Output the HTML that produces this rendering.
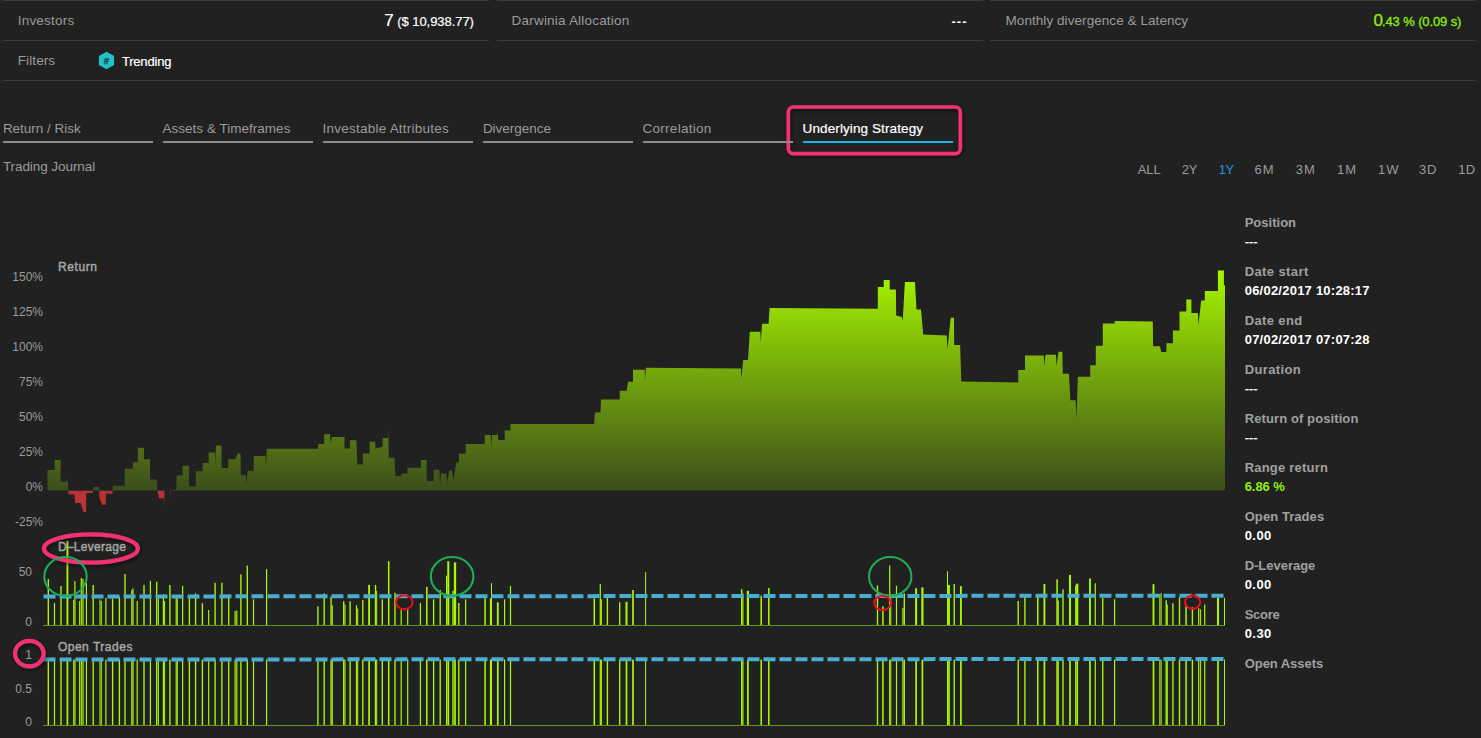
<!DOCTYPE html>
<html><head><meta charset="utf-8"><title>Underlying Strategy</title>
<style>
html,body{margin:0;padding:0;background:#212121;}
body{width:1481px;height:738px;position:relative;overflow:hidden;font-family:"Liberation Sans",sans-serif;color:#9b9b9b;font-size:13px;}
.chart{position:absolute;left:0;top:0;}
.t{position:absolute;white-space:nowrap;line-height:1;transform-origin:0 50%;}
.r{position:absolute;white-space:nowrap;line-height:1;transform-origin:100% 50%;}
.hl{position:absolute;height:1px;background:#3d3d3d;}
.ul{position:absolute;height:2px;background:#8c8c8c;top:141px;width:150px;}
.w{color:#fff;-webkit-text-stroke:0.2px #fff;}
.b{font-weight:bold;-webkit-text-stroke:0 !important;}
.sb{color:#a6a6a6;-webkit-text-stroke:0.45px #a6a6a6;}
.g{color:#90ee0c;-webkit-text-stroke:0.3px #90ee0c;}
.ax{position:absolute;white-space:nowrap;line-height:1;font-size:12px;color:#9b9b9b;text-align:right;width:40px;left:3px;}
</style></head><body>
<svg class="chart" width="1481" height="738" viewBox="0 0 1481 738">
<defs>
<linearGradient id="gg" gradientUnits="userSpaceOnUse" x1="0" y1="270" x2="0" y2="491">
<stop offset="0" stop-color="#a6f600"/><stop offset="1" stop-color="#3c4d1b"/>
</linearGradient>
<clipPath id="up"><rect x="0" y="200" width="1481" height="291"/></clipPath>
<clipPath id="dn"><rect x="0" y="491" width="1481" height="60"/></clipPath>
<filter id="sh" x="-20%" y="-20%" width="140%" height="150%"><feDropShadow dx="1" dy="2" stdDeviation="2" flood-color="#000" flood-opacity="0.55"/></filter>
</defs>
<polygon points="44,490.5 47.5,490.5 47.5,469.9 54.6,469.9 54.6,460 60.6,460 60.6,481.6 67.3,481.6 67.8,477.6 68.2,490.5 68.5,494.5 74.5,494.5 75.2,503 80.6,503 83.4,512 86.1,512 86.3,493 92.8,493 93.3,487 99,487 99.6,498.5 102.3,504.7 105.7,504.7 106,493.8 112.5,493.8 112.8,485.7 124.7,485.7 124.7,468.8 132.8,468.8 132.8,462.3 137.8,462.3 137.8,447.8 144,447.8 144,459.3 150,459.3 150,479.6 156.8,479.6 157.2,490.5 159.2,498.3 163.8,498.3 164,506.7 164.5,490.5 169.8,490.5 170,500 170.4,489.8 176.4,489.8 176.6,475.5 182.5,475.5 182.5,465.8 189,465.8 189,486.4 195.8,486.4 195.8,471.2 202.6,471.2 202.6,463 208.7,463 208.7,452.5 214.8,452.5 215.2,463 215.9,445.5 221.6,445.5 221.6,468 228.3,468 228.3,459.3 235.4,459.3 237.6,453.6 240.5,453.6 240.8,475.3 246,475.3 246.5,485 247.6,470.8 253.7,470.8 253.7,455.9 265.5,455.9 265.9,466.7 266.9,448.7 318,448.7 318,444.1 324.2,444.1 324.2,434.2 330,434.2 330.5,443.7 331.9,436.9 344.5,436.9 344.5,448.5 349.9,448.5 349.9,440.3 356.3,440.3 357.4,464.4 362.8,464.4 362.8,453.6 369.6,453.6 369.6,441.7 375.3,441.7 375.3,448.5 382.5,446.8 382.8,438 388,438 388.3,429.5 388.8,457.7 394.4,457.7 395.6,476.2 401.4,476.2 401.4,473.5 407.5,473.5 407.5,467.7 420.8,467.7 421,460 426.7,460 426.8,481 433.6,481 433.6,469.8 439.4,469.8 440,485.4 441,473.4 446.2,473.4 447.2,483.3 449.1,470.5 452,470.5 453.3,480.6 456.3,462.6 459,462.6 459,453.8 465.7,453.8 465.7,444 484.8,444 484.8,435 490.8,435 491.1,446.7 492.1,435 497.3,435 497.5,430 498.3,440 504.7,440 504.7,430.5 510.5,430.5 510.5,424 594.1,424 595,412.5 600.5,412.5 601,399.4 619.7,399.4 619.7,390.7 626.7,390.7 628,381.7 633,381.7 633,369.7 644.7,369.7 645,380 645.9,367.7 741,368.5 741.4,378.4 743.2,360 748,360 749.8,331.7 760.4,331.7 760.8,342.5 762,323.7 768.6,323.7 769.6,308 877.8,308.8 877.8,287.1 883.7,287.1 883.7,280.1 889.7,280.1 889.7,289.4 895.9,289.4 896.2,315.5 901.8,317 902.7,320.7 904.9,281.9 915,281.9 916.5,309.5 921,309.5 923.2,334.4 946.8,335.4 947.4,349.5 950.7,317.8 954,317.8 954.2,345 960.1,345 961.3,381.5 1018.3,382.6 1018.3,369.9 1025,369.9 1025,355.5 1043.8,355.5 1044.2,365.9 1045.5,354.7 1056,354.7 1056.5,365.9 1058.5,351.7 1062.3,351.7 1062.8,373.8 1068.9,373.8 1070.4,400.2 1075.6,400.2 1076.4,418.5 1077.9,376.8 1090.2,376.8 1090.2,365.2 1095.8,365.2 1095.8,345.8 1102.8,345.8 1102.8,323.4 1114.7,323.4 1114.7,320.9 1152.8,321.4 1153.1,346.2 1159.8,346.2 1161.3,352.1 1166.3,352.1 1166.5,343.2 1172.9,343.2 1172.9,330.4 1179.5,330.4 1179.5,311.4 1186.3,311.4 1186.3,299.5 1191.4,299.5 1191.4,312.9 1198,312.9 1198.3,325.6 1201.2,300.5 1204.8,300.5 1204.8,291 1217.9,291 1217.9,270.4 1223.9,270.4 1223.9,285.3 1225,285.3 1225,490.5" fill="url(#gg)" clip-path="url(#up)"/>
<polygon points="44,490.5 47.5,490.5 47.5,469.9 54.6,469.9 54.6,460 60.6,460 60.6,481.6 67.3,481.6 67.8,477.6 68.2,490.5 68.5,494.5 74.5,494.5 75.2,503 80.6,503 83.4,512 86.1,512 86.3,493 92.8,493 93.3,487 99,487 99.6,498.5 102.3,504.7 105.7,504.7 106,493.8 112.5,493.8 112.8,485.7 124.7,485.7 124.7,468.8 132.8,468.8 132.8,462.3 137.8,462.3 137.8,447.8 144,447.8 144,459.3 150,459.3 150,479.6 156.8,479.6 157.2,490.5 159.2,498.3 163.8,498.3 164,506.7 164.5,490.5 169.8,490.5 170,500 170.4,489.8 176.4,489.8 176.6,475.5 182.5,475.5 182.5,465.8 189,465.8 189,486.4 195.8,486.4 195.8,471.2 202.6,471.2 202.6,463 208.7,463 208.7,452.5 214.8,452.5 215.2,463 215.9,445.5 221.6,445.5 221.6,468 228.3,468 228.3,459.3 235.4,459.3 237.6,453.6 240.5,453.6 240.8,475.3 246,475.3 246.5,485 247.6,470.8 253.7,470.8 253.7,455.9 265.5,455.9 265.9,466.7 266.9,448.7 318,448.7 318,444.1 324.2,444.1 324.2,434.2 330,434.2 330.5,443.7 331.9,436.9 344.5,436.9 344.5,448.5 349.9,448.5 349.9,440.3 356.3,440.3 357.4,464.4 362.8,464.4 362.8,453.6 369.6,453.6 369.6,441.7 375.3,441.7 375.3,448.5 382.5,446.8 382.8,438 388,438 388.3,429.5 388.8,457.7 394.4,457.7 395.6,476.2 401.4,476.2 401.4,473.5 407.5,473.5 407.5,467.7 420.8,467.7 421,460 426.7,460 426.8,481 433.6,481 433.6,469.8 439.4,469.8 440,485.4 441,473.4 446.2,473.4 447.2,483.3 449.1,470.5 452,470.5 453.3,480.6 456.3,462.6 459,462.6 459,453.8 465.7,453.8 465.7,444 484.8,444 484.8,435 490.8,435 491.1,446.7 492.1,435 497.3,435 497.5,430 498.3,440 504.7,440 504.7,430.5 510.5,430.5 510.5,424 594.1,424 595,412.5 600.5,412.5 601,399.4 619.7,399.4 619.7,390.7 626.7,390.7 628,381.7 633,381.7 633,369.7 644.7,369.7 645,380 645.9,367.7 741,368.5 741.4,378.4 743.2,360 748,360 749.8,331.7 760.4,331.7 760.8,342.5 762,323.7 768.6,323.7 769.6,308 877.8,308.8 877.8,287.1 883.7,287.1 883.7,280.1 889.7,280.1 889.7,289.4 895.9,289.4 896.2,315.5 901.8,317 902.7,320.7 904.9,281.9 915,281.9 916.5,309.5 921,309.5 923.2,334.4 946.8,335.4 947.4,349.5 950.7,317.8 954,317.8 954.2,345 960.1,345 961.3,381.5 1018.3,382.6 1018.3,369.9 1025,369.9 1025,355.5 1043.8,355.5 1044.2,365.9 1045.5,354.7 1056,354.7 1056.5,365.9 1058.5,351.7 1062.3,351.7 1062.8,373.8 1068.9,373.8 1070.4,400.2 1075.6,400.2 1076.4,418.5 1077.9,376.8 1090.2,376.8 1090.2,365.2 1095.8,365.2 1095.8,345.8 1102.8,345.8 1102.8,323.4 1114.7,323.4 1114.7,320.9 1152.8,321.4 1153.1,346.2 1159.8,346.2 1161.3,352.1 1166.3,352.1 1166.5,343.2 1172.9,343.2 1172.9,330.4 1179.5,330.4 1179.5,311.4 1186.3,311.4 1186.3,299.5 1191.4,299.5 1191.4,312.9 1198,312.9 1198.3,325.6 1201.2,300.5 1204.8,300.5 1204.8,291 1217.9,291 1217.9,270.4 1223.9,270.4 1223.9,285.3 1225,285.3 1225,490.5" fill="#b93234" clip-path="url(#dn)"/>
<g fill="#a6fa00"><rect x="47.62" y="579" width="1.36" height="46.8"/><rect x="53.91" y="603" width="1.19" height="22.8"/><rect x="60.32" y="586" width="1.36" height="39.8"/><rect x="66.47" y="541" width="1.87" height="84.8"/><rect x="73.19" y="600" width="1.02" height="25.8"/><rect x="74.31" y="581" width="1.19" height="44.8"/><rect x="79.09" y="601" width="1.02" height="24.8"/><rect x="80.70" y="578" width="1.19" height="47.8"/><rect x="82.41" y="579" width="1.19" height="46.8"/><rect x="85.81" y="582.5" width="1.19" height="43.3"/><rect x="92.52" y="585" width="1.36" height="40.8"/><rect x="99.49" y="599.4" width="1.02" height="26.4"/><rect x="100.79" y="601" width="1.02" height="24.8"/><rect x="105.31" y="597.8" width="1.19" height="28.0"/><rect x="111.92" y="598.6" width="1.36" height="27.2"/><rect x="118.72" y="597" width="1.36" height="28.8"/><rect x="124.32" y="574" width="1.36" height="51.8"/><rect x="131.21" y="590" width="1.19" height="35.8"/><rect x="132.41" y="588.4" width="1.19" height="37.4"/><rect x="136.60" y="601" width="1.19" height="24.8"/><rect x="143.32" y="585" width="1.36" height="40.8"/><rect x="149.81" y="580.8" width="1.19" height="45.0"/><rect x="156.02" y="581.7" width="1.36" height="44.1"/><rect x="157.89" y="597" width="1.02" height="28.8"/><rect x="162.81" y="594.4" width="1.19" height="31.4"/><rect x="164.09" y="601" width="1.02" height="24.8"/><rect x="169.22" y="585" width="1.36" height="40.8"/><rect x="175.60" y="597.8" width="1.19" height="28.0"/><rect x="176.79" y="598.6" width="1.02" height="27.2"/><rect x="182.00" y="585.9" width="1.19" height="39.9"/><rect x="188.72" y="597.8" width="1.36" height="28.0"/><rect x="194.92" y="593.5" width="1.36" height="32.3"/><rect x="201.72" y="603.2" width="1.36" height="22.6"/><rect x="208.10" y="610" width="1.19" height="15.8"/><rect x="214.42" y="582.8" width="1.36" height="43.0"/><rect x="221.22" y="582.8" width="1.36" height="43.0"/><rect x="228.02" y="597.8" width="1.36" height="28.0"/><rect x="234.50" y="611" width="1.19" height="14.8"/><rect x="236.21" y="610.5" width="1.19" height="15.3"/><rect x="240.22" y="574.4" width="1.36" height="51.4"/><rect x="246.62" y="565.6" width="1.36" height="60.2"/><rect x="252.91" y="599.3" width="1.19" height="26.5"/><rect x="266.00" y="569.1" width="1.19" height="56.7"/><rect x="317.22" y="606.4" width="1.36" height="19.4"/><rect x="323.52" y="593.4" width="1.36" height="32.4"/><rect x="330.42" y="596.7" width="1.36" height="29.1"/><rect x="331.79" y="605.2" width="1.02" height="20.6"/><rect x="343.02" y="601.3" width="1.36" height="24.5"/><rect x="344.49" y="604.4" width="1.02" height="21.4"/><rect x="349.42" y="601.3" width="1.36" height="24.5"/><rect x="355.90" y="605.2" width="1.19" height="20.6"/><rect x="357.19" y="608.6" width="1.02" height="17.2"/><rect x="362.12" y="600.1" width="1.36" height="25.7"/><rect x="368.17" y="584.9" width="1.87" height="40.9"/><rect x="374.82" y="584.9" width="1.36" height="40.9"/><rect x="376.19" y="590.8" width="1.02" height="35.0"/><rect x="381.62" y="599.3" width="1.36" height="26.5"/><rect x="387.94" y="561.2" width="1.53" height="64.6"/><rect x="394.32" y="592.8" width="1.36" height="33.0"/><rect x="400.60" y="609.4" width="1.19" height="16.4"/><rect x="407.10" y="609.4" width="1.19" height="16.4"/><rect x="419.80" y="603" width="1.19" height="22.8"/><rect x="426.04" y="586.9" width="1.53" height="38.9"/><rect x="432.92" y="599.3" width="1.36" height="26.5"/><rect x="439.52" y="590" width="1.36" height="35.8"/><rect x="446.00" y="575.6" width="1.19" height="50.2"/><rect x="447.28" y="561.2" width="2.04" height="64.6"/><rect x="452.32" y="590.8" width="1.36" height="35.0"/><rect x="453.85" y="562.4" width="2.3" height="63.4"/><rect x="458.12" y="603" width="1.36" height="22.8"/><rect x="465.00" y="599.3" width="1.19" height="26.5"/><rect x="484.34" y="598.4" width="1.53" height="27.4"/><rect x="489.90" y="598.4" width="1.19" height="27.4"/><rect x="490.99" y="583.2" width="1.02" height="42.6"/><rect x="496.87" y="602.3" width="1.87" height="23.5"/><rect x="504.00" y="599.3" width="1.19" height="26.5"/><rect x="509.90" y="586" width="1.19" height="39.8"/><rect x="593.53" y="598.4" width="1.53" height="27.4"/><rect x="599.70" y="584" width="1.19" height="41.8"/><rect x="600.70" y="599.3" width="1.19" height="26.5"/><rect x="606.72" y="594.5" width="1.36" height="31.3"/><rect x="619.02" y="602.3" width="1.36" height="23.5"/><rect x="625.48" y="601.8" width="2.04" height="24.0"/><rect x="632.15" y="590" width="1.7" height="35.8"/><rect x="645.09" y="572.2" width="1.02" height="53.6"/><rect x="741.02" y="589.1" width="1.36" height="36.7"/><rect x="742.30" y="593.4" width="1.19" height="32.4"/><rect x="746.79" y="590.8" width="2.21" height="35.0"/><rect x="760.44" y="595.6" width="1.53" height="30.2"/><rect x="768.03" y="587.9" width="1.53" height="37.9"/><rect x="876.82" y="585.4" width="1.36" height="40.4"/><rect x="882.13" y="606.4" width="1.53" height="19.4"/><rect x="889.11" y="565.4" width="1.19" height="60.4"/><rect x="890.29" y="594.2" width="1.02" height="31.6"/><rect x="895.90" y="585.7" width="1.19" height="40.1"/><rect x="902.30" y="607.8" width="1.19" height="18.0"/><rect x="903.62" y="593.4" width="1.36" height="32.4"/><rect x="915.08" y="588.3" width="2.04" height="37.5"/><rect x="921.29" y="587.4" width="2.21" height="38.4"/><rect x="946.99" y="571.3" width="1.02" height="54.5"/><rect x="948.07" y="584.9" width="1.87" height="40.9"/><rect x="953.52" y="584" width="1.36" height="41.8"/><rect x="959.97" y="586.1" width="1.87" height="39.7"/><rect x="1017.52" y="601" width="1.36" height="24.8"/><rect x="1024.22" y="597" width="1.36" height="28.8"/><rect x="1037.03" y="597" width="1.53" height="28.8"/><rect x="1043.47" y="584" width="1.87" height="41.8"/><rect x="1056.33" y="579.3" width="1.53" height="46.5"/><rect x="1057.61" y="600.7" width="1.19" height="25.1"/><rect x="1062.32" y="589.3" width="1.36" height="36.5"/><rect x="1068.98" y="575" width="2.04" height="50.8"/><rect x="1075.11" y="585.5" width="1.19" height="40.3"/><rect x="1076.10" y="583.6" width="2.21" height="42.2"/><rect x="1089.07" y="578.5" width="1.87" height="47.3"/><rect x="1094.70" y="583.3" width="1.19" height="42.5"/><rect x="1102.02" y="597.9" width="1.36" height="27.9"/><rect x="1114.00" y="599.2" width="1.19" height="26.6"/><rect x="1152.57" y="584.2" width="1.87" height="41.6"/><rect x="1159.29" y="594" width="1.02" height="31.8"/><rect x="1160.59" y="593" width="1.02" height="32.8"/><rect x="1165.52" y="600.3" width="1.36" height="25.5"/><rect x="1166.79" y="604.5" width="1.02" height="21.3"/><rect x="1172.22" y="603.2" width="1.36" height="22.6"/><rect x="1178.82" y="597" width="1.36" height="28.8"/><rect x="1185.33" y="604.5" width="1.53" height="21.3"/><rect x="1191.72" y="607.3" width="1.36" height="18.5"/><rect x="1198.11" y="608.3" width="1.19" height="17.5"/><rect x="1200.09" y="609.3" width="1.02" height="16.5"/><rect x="1204.11" y="604.5" width="1.19" height="21.3"/><rect x="1216.98" y="597.9" width="2.04" height="27.9"/><rect x="1223.99" y="597.9" width="1.02" height="27.9"/></g>
<rect x="43" y="625" width="1182" height="1" fill="#6a9410"/>
<g fill="#a6fa00"><rect x="47.62" y="659.5" width="1.36" height="66"/><rect x="53.91" y="659.5" width="1.19" height="66"/><rect x="60.32" y="659.5" width="1.36" height="66"/><rect x="66.55" y="659.5" width="1.7" height="66"/><rect x="73.19" y="659.5" width="1.02" height="66"/><rect x="74.31" y="659.5" width="1.19" height="66"/><rect x="79.09" y="659.5" width="1.02" height="66"/><rect x="80.70" y="659.5" width="1.19" height="66"/><rect x="82.41" y="659.5" width="1.19" height="66"/><rect x="85.81" y="659.5" width="1.19" height="66"/><rect x="92.52" y="659.5" width="1.36" height="66"/><rect x="99.49" y="659.5" width="1.02" height="66"/><rect x="100.79" y="659.5" width="1.02" height="66"/><rect x="105.31" y="659.5" width="1.19" height="66"/><rect x="111.92" y="659.5" width="1.36" height="66"/><rect x="118.72" y="659.5" width="1.36" height="66"/><rect x="124.32" y="659.5" width="1.36" height="66"/><rect x="131.21" y="659.5" width="1.19" height="66"/><rect x="132.41" y="659.5" width="1.19" height="66"/><rect x="136.60" y="659.5" width="1.19" height="66"/><rect x="143.32" y="659.5" width="1.36" height="66"/><rect x="149.81" y="659.5" width="1.19" height="66"/><rect x="156.02" y="659.5" width="1.36" height="66"/><rect x="157.89" y="659.5" width="1.02" height="66"/><rect x="162.81" y="659.5" width="1.19" height="66"/><rect x="164.09" y="659.5" width="1.02" height="66"/><rect x="169.22" y="659.5" width="1.36" height="66"/><rect x="175.60" y="659.5" width="1.19" height="66"/><rect x="176.79" y="659.5" width="1.02" height="66"/><rect x="182.00" y="659.5" width="1.19" height="66"/><rect x="188.72" y="659.5" width="1.36" height="66"/><rect x="194.92" y="659.5" width="1.36" height="66"/><rect x="201.72" y="659.5" width="1.36" height="66"/><rect x="208.10" y="659.5" width="1.19" height="66"/><rect x="214.42" y="659.5" width="1.36" height="66"/><rect x="221.22" y="659.5" width="1.36" height="66"/><rect x="228.02" y="659.5" width="1.36" height="66"/><rect x="234.50" y="659.5" width="1.19" height="66"/><rect x="236.21" y="659.5" width="1.19" height="66"/><rect x="240.22" y="659.5" width="1.36" height="66"/><rect x="246.62" y="659.5" width="1.36" height="66"/><rect x="252.91" y="659.5" width="1.19" height="66"/><rect x="266.00" y="659.5" width="1.19" height="66"/><rect x="317.22" y="659.5" width="1.36" height="66"/><rect x="323.52" y="659.5" width="1.36" height="66"/><rect x="330.42" y="659.5" width="1.36" height="66"/><rect x="331.79" y="659.5" width="1.02" height="66"/><rect x="343.02" y="659.5" width="1.36" height="66"/><rect x="344.49" y="659.5" width="1.02" height="66"/><rect x="349.42" y="659.5" width="1.36" height="66"/><rect x="355.90" y="659.5" width="1.19" height="66"/><rect x="357.19" y="659.5" width="1.02" height="66"/><rect x="362.12" y="659.5" width="1.36" height="66"/><rect x="368.25" y="659.5" width="1.7" height="66"/><rect x="374.82" y="659.5" width="1.36" height="66"/><rect x="376.19" y="659.5" width="1.02" height="66"/><rect x="381.62" y="659.5" width="1.36" height="66"/><rect x="387.94" y="659.5" width="1.53" height="66"/><rect x="394.32" y="659.5" width="1.36" height="66"/><rect x="400.60" y="659.5" width="1.19" height="66"/><rect x="407.10" y="659.5" width="1.19" height="66"/><rect x="419.80" y="659.5" width="1.19" height="66"/><rect x="426.04" y="659.5" width="1.53" height="66"/><rect x="432.92" y="659.5" width="1.36" height="66"/><rect x="439.52" y="659.5" width="1.36" height="66"/><rect x="446.00" y="659.5" width="1.19" height="66"/><rect x="447.45" y="659.5" width="1.7" height="66"/><rect x="452.32" y="659.5" width="1.36" height="66"/><rect x="454.15" y="659.5" width="1.7" height="66"/><rect x="458.12" y="659.5" width="1.36" height="66"/><rect x="465.00" y="659.5" width="1.19" height="66"/><rect x="484.34" y="659.5" width="1.53" height="66"/><rect x="489.90" y="659.5" width="1.19" height="66"/><rect x="490.99" y="659.5" width="1.02" height="66"/><rect x="496.95" y="659.5" width="1.7" height="66"/><rect x="504.00" y="659.5" width="1.19" height="66"/><rect x="509.90" y="659.5" width="1.19" height="66"/><rect x="593.53" y="659.5" width="1.53" height="66"/><rect x="599.70" y="659.5" width="1.19" height="66"/><rect x="600.70" y="659.5" width="1.19" height="66"/><rect x="606.72" y="659.5" width="1.36" height="66"/><rect x="619.02" y="659.5" width="1.36" height="66"/><rect x="625.65" y="659.5" width="1.7" height="66"/><rect x="632.15" y="659.5" width="1.7" height="66"/><rect x="645.09" y="659.5" width="1.02" height="66"/><rect x="741.02" y="659.5" width="1.36" height="66"/><rect x="742.30" y="659.5" width="1.19" height="66"/><rect x="747.05" y="659.5" width="1.7" height="66"/><rect x="760.44" y="659.5" width="1.53" height="66"/><rect x="768.03" y="659.5" width="1.53" height="66"/><rect x="876.82" y="659.5" width="1.36" height="66"/><rect x="882.13" y="659.5" width="1.53" height="66"/><rect x="889.11" y="659.5" width="1.19" height="66"/><rect x="890.29" y="659.5" width="1.02" height="66"/><rect x="895.90" y="659.5" width="1.19" height="66"/><rect x="902.30" y="659.5" width="1.19" height="66"/><rect x="903.62" y="659.5" width="1.36" height="66"/><rect x="915.25" y="659.5" width="1.7" height="66"/><rect x="921.55" y="659.5" width="1.7" height="66"/><rect x="946.99" y="659.5" width="1.02" height="66"/><rect x="948.15" y="659.5" width="1.7" height="66"/><rect x="953.52" y="659.5" width="1.36" height="66"/><rect x="960.05" y="659.5" width="1.7" height="66"/><rect x="1017.52" y="659.5" width="1.36" height="66"/><rect x="1024.22" y="659.5" width="1.36" height="66"/><rect x="1037.03" y="659.5" width="1.53" height="66"/><rect x="1043.55" y="659.5" width="1.7" height="66"/><rect x="1056.33" y="659.5" width="1.53" height="66"/><rect x="1057.61" y="659.5" width="1.19" height="66"/><rect x="1062.32" y="659.5" width="1.36" height="66"/><rect x="1069.15" y="659.5" width="1.7" height="66"/><rect x="1075.11" y="659.5" width="1.19" height="66"/><rect x="1076.35" y="659.5" width="1.7" height="66"/><rect x="1089.15" y="659.5" width="1.7" height="66"/><rect x="1094.70" y="659.5" width="1.19" height="66"/><rect x="1102.02" y="659.5" width="1.36" height="66"/><rect x="1114.00" y="659.5" width="1.19" height="66"/><rect x="1152.65" y="659.5" width="1.7" height="66"/><rect x="1159.29" y="659.5" width="1.02" height="66"/><rect x="1160.59" y="659.5" width="1.02" height="66"/><rect x="1165.52" y="659.5" width="1.36" height="66"/><rect x="1166.79" y="659.5" width="1.02" height="66"/><rect x="1172.22" y="659.5" width="1.36" height="66"/><rect x="1178.82" y="659.5" width="1.36" height="66"/><rect x="1185.33" y="659.5" width="1.53" height="66"/><rect x="1191.72" y="659.5" width="1.36" height="66"/><rect x="1198.11" y="659.5" width="1.19" height="66"/><rect x="1200.09" y="659.5" width="1.02" height="66"/><rect x="1204.11" y="659.5" width="1.19" height="66"/><rect x="1217.15" y="659.5" width="1.7" height="66"/><rect x="1223.99" y="659.5" width="1.02" height="66"/></g>
<rect x="43" y="725" width="1182" height="1" fill="#6a9410"/>
<line x1="43.5" y1="596.5" x2="1223.6" y2="595.7" stroke="#49aecf" stroke-width="4" stroke-dasharray="12 4"/>
<line x1="43.5" y1="659.5" x2="1223.6" y2="659" stroke="#49aecf" stroke-width="4" stroke-dasharray="12 4"/>
<g fill="none" stroke="#f2336f" stroke-width="4.2" filter="url(#sh)">
<rect x="788.3" y="107" width="172" height="46.6" rx="5" ry="5" stroke-width="3.6"/>
<ellipse cx="90.9" cy="548.5" rx="47" ry="14.1"/>
<ellipse cx="29.3" cy="653.6" rx="14.3" ry="12.8"/>
</g>
<g fill="none" stroke="#1fac58" stroke-width="2.1">
<ellipse cx="65.5" cy="576.5" rx="21.2" ry="19.5"/><ellipse cx="452.1" cy="576.4" rx="21.3" ry="19.4"/><ellipse cx="890.2" cy="576.4" rx="21.2" ry="19.4"/>
</g>
<g fill="none" stroke="#f00a1e" stroke-width="2">
<ellipse cx="404.3" cy="602.2" rx="8.3" ry="7"/><ellipse cx="882.6" cy="603" rx="8.4" ry="7"/><ellipse cx="1192.6" cy="602.2" rx="7.6" ry="6.6"/>
</g>
<polygon points="106.5,51.7 114.1,56 114.1,64.9 106.5,69.2 98.9,64.9 98.9,56" fill="#21c3c9"/>
<text x="106.5" y="63.8" text-anchor="middle" font-family="Liberation Sans, sans-serif" font-weight="bold" font-size="9.5" fill="#15555b" stroke="#15555b" stroke-width="0.5">#</text>
</svg>
<div class="hl" style="left:3px;width:486px;top:0"></div>
<div class="hl" style="left:3px;width:486px;top:40px"></div>
<div class="hl" style="left:497px;width:486px;top:0"></div>
<div class="hl" style="left:497px;width:486px;top:40px"></div>
<div class="hl" style="left:990px;width:486px;top:0"></div>
<div class="hl" style="left:990px;width:486px;top:40px"></div>
<div class="hl" style="left:3px;width:1473px;top:80px"></div>
<div class="ul" style="left:3px;"></div>
<div class="ul" style="left:163px;"></div>
<div class="ul" style="left:323px;"></div>
<div class="ul" style="left:483px;"></div>
<div class="ul" style="left:643px;"></div>
<div class="ul" style="left:803px;background:#19b5e8;"></div>
<div class="ax" style="top:271px">150%</div>
<div class="ax" style="top:306px">125%</div>
<div class="ax" style="top:341px">100%</div>
<div class="ax" style="top:376px">75%</div>
<div class="ax" style="top:411px">50%</div>
<div class="ax" style="top:446px">25%</div>
<div class="ax" style="top:481px">0%</div>
<div class="ax" style="top:516px">-25%</div>
<div class="ax" style="top:566px;width:29px">50</div>
<div class="ax" style="top:615.5px;width:29px">0</div>
<div class="ax" style="top:649px;width:29px">1</div>
<div class="ax" style="top:683px;width:29px">0.5</div>
<div class="ax" style="top:715.7px;width:29px">0</div>
<div class="t " style="left:17.7px;top:13.9px;font-size:13.5px;letter-spacing:0.217px;">Investors</div>
<div class="t w" style="left:384.2px;top:11.9px;font-size:17px;">7</div>
<div class="t w" style="left:397.2px;top:15.3px;font-size:13px;letter-spacing:-0.048px;">($ 10,938.77)</div>
<div class="t " style="left:511.6px;top:13.9px;font-size:13.5px;letter-spacing:0.197px;">Darwinia Allocation</div>
<div class="t w b" style="left:951.5px;top:14.6px;font-size:13px;letter-spacing:1.000px;">---</div>
<div class="t " style="left:1005.5px;top:13.9px;font-size:13.5px;letter-spacing:0.065px;">Monthly divergence &amp; Latency</div>
<div class="t g" style="left:1373.6px;top:12.0px;font-size:17px;">0</div>
<div class="t g" style="left:1382.0px;top:15.4px;font-size:13px;letter-spacing:-0.121px;">.43 % (0.09 s)</div>
<div class="t " style="left:17.7px;top:53.6px;font-size:13.5px;letter-spacing:0.111px;">Filters</div>
<div class="t w" style="left:121.9px;top:54.8px;font-size:13px;letter-spacing:-0.180px;">Trending</div>
<div class="t " style="left:2.9px;top:121.9px;font-size:13.5px;letter-spacing:-0.018px;">Return / Risk</div>
<div class="t " style="left:162.5px;top:121.9px;font-size:13.5px;letter-spacing:0.020px;">Assets &amp; Timeframes</div>
<div class="t " style="left:322.6px;top:121.9px;font-size:13.5px;letter-spacing:0.227px;">Investable Attributes</div>
<div class="t " style="left:482.9px;top:121.9px;font-size:13.5px;letter-spacing:-0.031px;">Divergence</div>
<div class="t " style="left:642.5px;top:121.9px;font-size:13.5px;letter-spacing:0.278px;">Correlation</div>
<div class="t w" style="left:802.6px;top:121.9px;font-size:13.5px;letter-spacing:0.103px;">Underlying Strategy</div>
<div class="t " style="left:2.9px;top:159.8px;font-size:13.5px;letter-spacing:-0.071px;">Trading Journal</div>
<div class="t " style="left:1137.8px;top:162.5px;font-size:13px;letter-spacing:-0.135px;">ALL</div>
<div class="t " style="left:1181.8px;top:162.5px;font-size:13px;letter-spacing:-0.300px;">2Y</div>
<div class="t " style="left:1218.7px;top:162.5px;font-size:13px;letter-spacing:-0.300px;color:#2b8fe6;">1Y</div>
<div class="t " style="left:1254.5px;top:162.5px;font-size:13px;letter-spacing:1.000px;">6M</div>
<div class="t " style="left:1295.8px;top:162.5px;font-size:13px;letter-spacing:1.000px;">3M</div>
<div class="t " style="left:1337.1px;top:162.5px;font-size:13px;letter-spacing:1.000px;">1M</div>
<div class="t " style="left:1378.0px;top:162.5px;font-size:13px;letter-spacing:0.970px;">1W</div>
<div class="t " style="left:1418.9px;top:162.5px;font-size:13px;letter-spacing:1.000px;">3D</div>
<div class="t " style="left:1458.2px;top:162.5px;font-size:13px;letter-spacing:0.445px;">1D</div>
<div class="t sb" style="left:58.0px;top:260.9px;font-size:12px;letter-spacing:0.570px;">Return</div>
<div class="t sb" style="left:57.9px;top:541.0px;font-size:12px;letter-spacing:0.288px;">D–Leverage</div>
<div class="t sb" style="left:57.9px;top:641.4px;font-size:12px;letter-spacing:0.511px;">Open Trades</div>
<div class="t b" style="left:1244.7px;top:216.1px;font-size:13px;letter-spacing:0.013px;color:#a0a0a0;">Position</div>
<div class="t w" style="left:1244.7px;top:234.9px;font-size:13px;">---</div>
<div class="t b" style="left:1244.7px;top:265.1px;font-size:13px;letter-spacing:0.400px;color:#a0a0a0;">Date start</div>
<div class="t b w" style="left:1244.7px;top:283.9px;font-size:13px;letter-spacing:0.231px;">06/02/2017 10:28:17</div>
<div class="t b" style="left:1244.7px;top:314.1px;font-size:13px;letter-spacing:0.366px;color:#a0a0a0;">Date end</div>
<div class="t b w" style="left:1244.7px;top:332.9px;font-size:13px;letter-spacing:0.231px;">07/02/2017 07:07:28</div>
<div class="t b" style="left:1244.7px;top:363.1px;font-size:13px;letter-spacing:0.374px;color:#a0a0a0;">Duration</div>
<div class="t w" style="left:1244.7px;top:381.9px;font-size:13px;">---</div>
<div class="t b" style="left:1244.7px;top:412.1px;font-size:13px;letter-spacing:0.102px;color:#a0a0a0;">Return of position</div>
<div class="t w" style="left:1244.7px;top:430.9px;font-size:13px;">---</div>
<div class="t b" style="left:1244.7px;top:461.1px;font-size:13px;letter-spacing:0.206px;color:#a0a0a0;">Range return</div>
<div class="t b g" style="left:1244.7px;top:479.9px;font-size:13px;letter-spacing:-0.063px;">6.86 %</div>
<div class="t b" style="left:1244.7px;top:510.1px;font-size:13px;letter-spacing:0.072px;color:#a0a0a0;">Open Trades</div>
<div class="t b w" style="left:1244.7px;top:528.9px;font-size:13px;letter-spacing:0.453px;">0.00</div>
<div class="t b" style="left:1244.7px;top:559.1px;font-size:13px;letter-spacing:-0.016px;color:#a0a0a0;">D-Leverage</div>
<div class="t b w" style="left:1244.7px;top:577.9px;font-size:13px;letter-spacing:0.453px;">0.00</div>
<div class="t b" style="left:1244.7px;top:608.1px;font-size:13px;letter-spacing:-0.268px;color:#a0a0a0;">Score</div>
<div class="t b w" style="left:1244.7px;top:626.9px;font-size:13px;letter-spacing:0.453px;">0.30</div>
<div class="t b" style="left:1244.7px;top:657.1px;font-size:13px;letter-spacing:-0.053px;color:#a0a0a0;">Open Assets</div>
</body></html>
